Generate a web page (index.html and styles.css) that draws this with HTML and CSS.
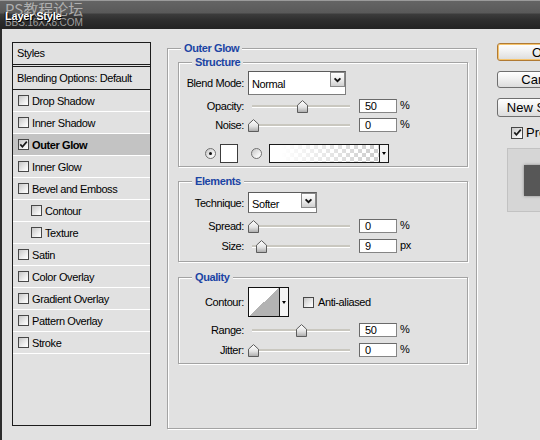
FILE: index.html
```html
<!DOCTYPE html>
<html lang="en">
<head>
	<meta charset="UTF-8">
	<meta name="viewport" content="width=device-width, initial-scale=1.0">
	<title>Layer Style</title>

	<link rel="stylesheet" href="styles.css">
</head>
<body>
	<svg class="sprite" width="0" height="0" aria-hidden="true">
		<defs>
			<linearGradient id="thumb-fill" x1="0" y1="0" x2="0" y2="1">
				<stop offset="0" stop-color="#ffffff"/>
				<stop offset=".55" stop-color="#e4e4e4"/>
				<stop offset="1" stop-color="#a9a9a9"/>
			</linearGradient>
			<symbol id="thumb" viewBox="0 0 11 13">
				<path d="M.5 5.2 5.5.6l5 4.6v7.3H.5z" fill="url(#thumb-fill)" stroke="#5c5c5c"/>
			</symbol>
			<symbol id="chevron" viewBox="0 0 13 12">
				<path d="M3 4l3.5 3.5L10 4" fill="none" stroke="#111" stroke-width="2.2"/>
			</symbol>
			<symbol id="tick" viewBox="0 0 9 9">
				<path d="M1.3 4.4l2.1 2.3L7.8 1.6" fill="none" stroke="#1a1a1a" stroke-width="1.7"/>
			</symbol>
		</defs>
	</svg>

	<div class="titlebar">
		<div class="watermark">
			<div class="watermark__cn">PS教程论坛</div>
			<div class="watermark__url">BBS.16XX8.COM</div>
		</div>
		<div class="titlebar__text">Layer Style</div>
	</div>

	<div class="dialog">
		<div class="styles">
			<div class="styles__head">Styles</div>
			<div class="styles__blend">Blending Options: Default</div>
			<div class="styles__item"><span class="check"></span>Drop Shadow</div>
			<div class="styles__item"><span class="check"></span>Inner Shadow</div>
			<div class="styles__item styles__item--active"><span class="check"><svg><use href="#tick"/></svg></span>Outer Glow</div>
			<div class="styles__item"><span class="check"></span>Inner Glow</div>
			<div class="styles__item"><span class="check"></span>Bevel and Emboss</div>
			<div class="styles__item styles__item--sub"><span class="check"></span>Contour</div>
			<div class="styles__item styles__item--sub"><span class="check"></span>Texture</div>
			<div class="styles__item"><span class="check"></span>Satin</div>
			<div class="styles__item"><span class="check"></span>Color Overlay</div>
			<div class="styles__item"><span class="check"></span>Gradient Overlay</div>
			<div class="styles__item"><span class="check"></span>Pattern Overlay</div>
			<div class="styles__item"><span class="check"></span>Stroke</div>
		</div>

		<fieldset class="group">
			<legend>Outer Glow</legend>

			<fieldset class="sub sub--structure">
				<legend>Structure</legend>
				<div class="row row--blend">
					<span class="row__label">Blend Mode:</span>
					<div class="select select--blend">
						<span class="select__value">Normal</span>
						<span class="select__btn"><svg><use href="#chevron"/></svg></span>
					</div>
				</div>
				<div class="row row--opacity">
					<span class="row__label">Opacity:</span>
					<div class="slider"><span class="slider__track"></span><svg class="slider__thumb" style="left: 49px"><use href="#thumb"/></svg></div>
					<span class="num">50</span><span class="unit">%</span>
				</div>
				<div class="row row--noise">
					<span class="row__label">Noise:</span>
					<div class="slider"><span class="slider__track"></span><svg class="slider__thumb" style="left: 0px"><use href="#thumb"/></svg></div>
					<span class="num">0</span><span class="unit">%</span>
				</div>
				<div class="row row--color">
					<span class="radio radio--on"></span>
					<span class="swatch"></span>
					<span class="radio radio--grad"></span>
					<div class="gradient">
						<span class="gradient__ramp"></span>
						<span class="gradient__btn"><span class="arrow"></span></span>
					</div>
				</div>
			</fieldset>

			<fieldset class="sub sub--elements">
				<legend>Elements</legend>
				<div class="row row--technique">
					<span class="row__label">Technique:</span>
					<div class="select select--technique">
						<span class="select__value">Softer</span>
						<span class="select__btn"><svg><use href="#chevron"/></svg></span>
					</div>
				</div>
				<div class="row row--spread">
					<span class="row__label">Spread:</span>
					<div class="slider"><span class="slider__track"></span><svg class="slider__thumb" style="left: 0px"><use href="#thumb"/></svg></div>
					<span class="num">0</span><span class="unit">%</span>
				</div>
				<div class="row row--size">
					<span class="row__label">Size:</span>
					<div class="slider"><span class="slider__track"></span><svg class="slider__thumb" style="left: 8px"><use href="#thumb"/></svg></div>
					<span class="num">9</span><span class="unit">px</span>
				</div>
			</fieldset>

			<fieldset class="sub sub--quality">
				<legend>Quality</legend>
				<div class="row row--contour">
					<span class="row__label">Contour:</span>
					<div class="contour">
						<span class="contour__curve"></span>
						<span class="contour__btn"><span class="arrow"></span></span>
					</div>
					<span class="check check--aa"></span>
					<span class="aa-label">Anti-aliased</span>
				</div>
				<div class="row row--range">
					<span class="row__label">Range:</span>
					<div class="slider"><span class="slider__track"></span><svg class="slider__thumb" style="left: 48px"><use href="#thumb"/></svg></div>
					<span class="num">50</span><span class="unit">%</span>
				</div>
				<div class="row row--jitter">
					<span class="row__label">Jitter:</span>
					<div class="slider"><span class="slider__track"></span><svg class="slider__thumb" style="left: 0px"><use href="#thumb"/></svg></div>
					<span class="num">0</span><span class="unit">%</span>
				</div>
			</fieldset>
		</fieldset>

		<div class="actions">
			<button class="btn btn--ok">OK</button>
			<button class="btn btn--cancel">Cancel</button>
			<button class="btn btn--new">New Style...</button>
			<label class="preview-toggle"><span class="check"><svg><use href="#tick"/></svg></span>Preview</label>
			<div class="preview"><div class="preview__swatch"></div></div>
		</div>
	</div>
</body>
</html>
```

FILE: styles.css
```css
* { box-sizing: border-box }
html, body {
	margin: 0;
}
body {
	width: 540px;
	height: 440px;
	overflow: hidden;
	background: #e1e1e1;
	color: #000;
	font-family: 'Liberation Sans', Arial, sans-serif;
	font-size: 11px;
	letter-spacing: -.4px;
}
.sprite {
	position: absolute;
	width: 0;
	height: 0;
	overflow: hidden;
}

/* title bar */
.titlebar {
	position: relative;
	height: 29px;
	background: linear-gradient(#9a9a9a 0, #9a9a9a 1px, #646464 1px, #595959 13px, #3c3c3c 14px, #2e2e2e 20px, #232323 29px);
}
.watermark {
	position: absolute;
	top: 0;
	left: 5px;
	color: rgba(210, 210, 210, .7);
	letter-spacing: 0;
}
.watermark__cn {
	font-family: 'Noto Sans CJK SC', 'Liberation Sans', sans-serif;
	font-size: 15px;
	line-height: 17px;
}
.watermark__url {
	margin-top: 1px;
	font-size: 10px;
	line-height: 10px;
	letter-spacing: -.1px;
}
.titlebar__text {
	position: relative;
	padding: 10px 0 0 5px;
	font-weight: bold;
	font-size: 11px;
	line-height: 13px;
	letter-spacing: -.2px;
	color: #fff;
	text-shadow: 1px 1px 0 #000, -1px 0 0 #111;
}

/* dialog body */
.dialog {
	display: flex;
	align-items: flex-start;
	height: 411px;
	padding: 13px 0 0 10px;
	border-left: 2px solid #2c2c2c;
}

/* styles list */
.styles {
	flex: none;
	width: 139px;
	height: 384px;
	border: 1px solid #1c1c1c;
}
.styles__head {
	height: 24px;
	padding-left: 4px;
	line-height: 21px;
	border-bottom: 3px double #1c1c1c;
}
.styles__blend {
	height: 23px;
	padding-left: 4px;
	line-height: 22px;
	border-bottom: 1px solid #1c1c1c;
}
.styles__item {
	display: flex;
	align-items: center;
	height: 22px;
	padding-left: 5px;
	border-bottom: 1px solid #fff;
}
.styles__item--sub {
	padding-left: 18px;
}
.styles__item--active {
	background: #c3c3c3;
	font-weight: bold;
}
.check {
	flex: none;
	display: flex;
	align-items: center;
	justify-content: center;
	width: 11px;
	height: 11px;
	margin-right: 3px;
	border: 1px solid #474747;
	background: linear-gradient(135deg, #c6c6c6, #f2f2f2 70%, #fff);
}
.check svg {
	width: 9px;
	height: 9px;
}

/* option groups */
.group {
	flex: none;
	width: 310px;
	height: 387px;
	min-inline-size: 0;
	margin: 0 0 0 16px;
	padding: 1px 8px 0 10px;
	border: 1px solid #a3a3a3;
	box-shadow: inset 1px 1px 0 #fff, 1px 1px 0 #fff;
}
legend {
	padding: 0 3px;
	line-height: 13px;
	font-weight: bold;
	color: #1b44a4;
	background: #e1e1e1;
}
.group > legend {
	margin-left: 3px;
}
.sub {
	width: 290px;
	min-inline-size: 0;
	margin: 0;
	padding: 0;
	border: 1px solid #a3a3a3;
	box-shadow: inset 1px 1px 0 #fff, 1px 1px 0 #fff;
}
.sub > legend {
	margin-left: 13px;
}
.sub--structure { padding-bottom: 3px }
.sub--elements { margin-top: 8px; padding-bottom: 8px }
.sub--quality { margin-top: 9px; padding-bottom: 6px }

.row {
	display: flex;
	align-items: center;
	height: 14px;
}
.row__label {
	flex: none;
	width: 65px;
	margin-right: 4px;
	text-align: right;
	white-space: nowrap;
}
.row--blend { height: 24px; margin-top: 2px }
.row--opacity { margin-top: 4px }
.row--noise { margin-top: 5px }
.row--color { height: 19px; margin-top: 12px }
.row--technique { height: 21px; margin-top: 4px }
.row--spread { margin-top: 6px }
.row--size { margin-top: 6px }
.row--contour { height: 30px; margin-top: 3px }
.row--range { margin-top: 6px }
.row--jitter { margin-top: 6px }

/* select */
.select {
	flex: none;
	display: flex;
	align-self: stretch;
	background: #fff;
	border: 1px solid #7d7d7d;
	border-top-color: #5c5c5c;
	border-left-color: #5c5c5c;
}
.select--blend { width: 98px }
.select--technique { width: 69px }
.select__value {
	flex: 1;
	align-self: center;
	padding: 2px 0 0 3px;
}
.select--technique .select__value { padding-top: 3px }
.select__btn {
	flex: none;
	display: flex;
	align-items: center;
	justify-content: center;
	width: 15px;
	height: 15px;
	margin: 0 0 auto;
	border: 1px solid #8a8a8a;
	background: linear-gradient(#ffffff, #e8e8e8 60%, #cfcfcf);
}
.select__btn svg {
	width: 11px;
	height: 10px;
}

/* slider */
.slider {
	position: relative;
	flex: none;
	width: 102px;
	height: 14px;
}
.slider__track {
	display: block;
	height: 3px;
	margin: 6px 0 0 4px;
	background: #c9c7bf;
	border-bottom: 1px solid #fff;
}
.slider__thumb {
	position: absolute;
	top: 1px;
	width: 11px;
	height: 13px;
}
.num {
	flex: none;
	width: 38px;
	height: 14px;
	margin-left: 9px;
	padding-left: 5px;
	line-height: 13px;
	background: #fff;
	border: 1px solid #858585;
	border-top-color: #6a6a6a;
	border-left-color: #6a6a6a;
}
.unit {
	margin-left: 3px;
	margin-top: -3px;
}

/* colour row */
.radio {
	flex: none;
	display: flex;
	align-items: center;
	justify-content: center;
	width: 11px;
	height: 11px;
	border: 1px solid #707070;
	border-radius: 50%;
	background: linear-gradient(135deg, #c4c4c4, #f5f5f5 70%, #fff);
}
.radio--on {
	margin-left: 26px;
}
.radio--on::after {
	content: '';
	width: 3px;
	height: 3px;
	border-radius: 50%;
	background: #111;
}
.swatch {
	flex: none;
	width: 18px;
	height: 19px;
	margin-left: 4px;
	background: #fff;
	border: 1px solid #3c3c3c;
}
.radio--grad {
	margin-left: 13px;
}
.gradient {
	flex: none;
	display: flex;
	width: 120px;
	height: 19px;
	margin-left: 7px;
	border: 1px solid #1a1a1a;
}
.gradient__ramp {
	flex: 1;
	background:
		linear-gradient(to right, #fff 10%, rgba(255, 255, 255, 0) 95%),
		repeating-conic-gradient(#cfcfcf 0 25%, #fff 0 50%) 0 0 / 8px 8px;
}
.gradient__btn,
.contour__btn {
	flex: none;
	display: flex;
	align-items: center;
	justify-content: center;
	width: 9px;
	border-left: 1px solid #1a1a1a;
	background: #f4f4f4;
}
.arrow {
	width: 0;
	height: 0;
	border-left: 2.5px solid transparent;
	border-right: 2.5px solid transparent;
	border-top: 3px solid #000;
}

/* contour */
.contour {
	flex: none;
	display: flex;
	align-self: stretch;
	width: 41px;
	border: 1px solid #111;
}
.contour__curve {
	width: 31px;
	background: linear-gradient(to bottom right, #fff 50%, #b3b3b3 50%);
}
.check--aa {
	margin-left: 14px;
}
.aa-label {
	margin-left: 1px;
}

/* buttons */
.actions {
	flex: none;
	width: 100px;
	margin-left: 20px;
}
.btn {
	display: block;
	width: 89px;
	margin: 0;
	padding: 0;
	font-family: inherit;
	font-size: 13px;
	letter-spacing: 0;
	color: #000;
	text-align: center;
	border: 1px solid #6f6f6f;
	border-radius: 3px;
	background: linear-gradient(#ffffff, #f1f1f1 45%, #dcdcdc);
}
.btn--ok {
	height: 18px;
	margin-top: 1px;
	line-height: 15px;
	border-color: #b07a34;
	box-shadow: inset 0 0 0 1px #f6c46c;
}
.btn--cancel {
	height: 17px;
	margin-top: 10px;
	line-height: 15px;
}
.btn--new {
	height: 19px;
	margin-top: 10px;
	line-height: 17px;
}
.preview-toggle {
	display: flex;
	align-items: center;
	margin-top: 8px;
	padding-left: 14px;
	font-size: 13px;
	letter-spacing: 0;
}
.preview-toggle .check {
	width: 12px;
	height: 12px;
	margin-right: 3px;
}
.preview {
	width: 70px;
	height: 64px;
	margin: 8px 0 0 10px;
	padding: 16px 0 0 16px;
	background: #d6d6d6;
	border: 1px solid #c2c2c2;
	border-right: 0;
}
.preview__swatch {
	width: 50px;
	height: 31px;
	background: #575757;
	box-shadow: 0 0 3px #8a8a8a;
}
```
